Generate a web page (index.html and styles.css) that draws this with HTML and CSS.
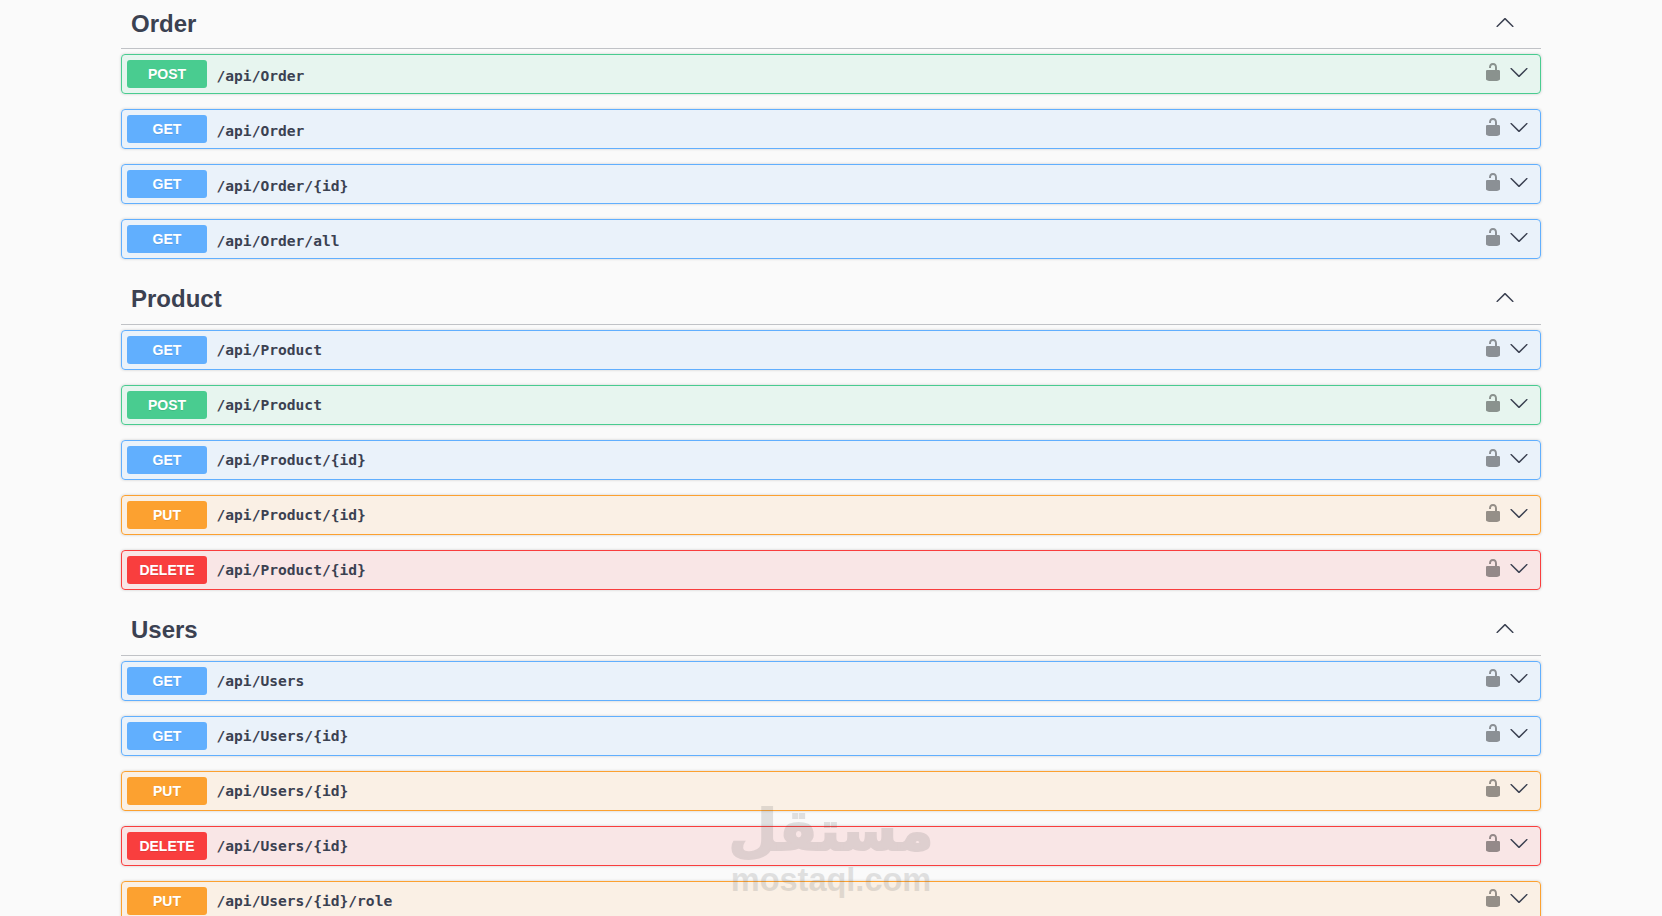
FILE: index.html
```html
<!DOCTYPE html>
<html lang="en">
<head>
<meta charset="utf-8">
<title>API</title>
<link rel="stylesheet" href="styles.css">
</head>
<body>
<svg class="defs" width="0" height="0" aria-hidden="true">
  <symbol id="lock" viewBox="0 0 20 20"><path d="M15.8 8H14V5.6C14 2.703 12.665 1 10 1 7.334 1 6 2.703 6 5.6V6h2v-.801C8 3.754 8.797 3 10 3c1.203 0 2 .754 2 2.199V8H4c-.553 0-1 .646-1 1.199V17c0 .549.428 1.139.951 1.307l1.197.387C5.672 18.861 6.55 19 7.1 19h5.8c.549 0 1.428-.139 1.951-.307l1.196-.387c.524-.167.953-.757.953-1.306V9.199C17 8.646 16.352 8 15.8 8z"/></symbol>
  <symbol id="down" viewBox="0 0 20 20"><path d="M17.418 6.109c.272-.268.709-.268.979 0s.271.701 0 .969l-7.908 7.83c-.27.268-.707.268-.979 0l-7.908-7.83c-.27-.268-.27-.701 0-.969.271-.268.709-.268.979 0L10 13.25l7.418-7.141z"/></symbol>
</svg>
<main class="wrapper">
  <section class="tag-section first">
    <h3 class="tag"><span class="tag-name">Order</span><svg class="up"><use href="#down"/></svg></h3>
    <div class="op post"><span class="method">POST</span><span class="path">/api/Order</span><svg class="lock"><use href="#lock"/></svg><svg class="down"><use href="#down"/></svg></div>
    <div class="op get"><span class="method">GET</span><span class="path">/api/Order</span><svg class="lock"><use href="#lock"/></svg><svg class="down"><use href="#down"/></svg></div>
    <div class="op get"><span class="method">GET</span><span class="path">/api/Order/{id}</span><svg class="lock"><use href="#lock"/></svg><svg class="down"><use href="#down"/></svg></div>
    <div class="op get"><span class="method">GET</span><span class="path">/api/Order/all</span><svg class="lock"><use href="#lock"/></svg><svg class="down"><use href="#down"/></svg></div>
  </section>
  <section class="tag-section">
    <h3 class="tag"><span class="tag-name">Product</span><svg class="up"><use href="#down"/></svg></h3>
    <div class="op get"><span class="method">GET</span><span class="path">/api/Product</span><svg class="lock"><use href="#lock"/></svg><svg class="down"><use href="#down"/></svg></div>
    <div class="op post"><span class="method">POST</span><span class="path">/api/Product</span><svg class="lock"><use href="#lock"/></svg><svg class="down"><use href="#down"/></svg></div>
    <div class="op get"><span class="method">GET</span><span class="path">/api/Product/{id}</span><svg class="lock"><use href="#lock"/></svg><svg class="down"><use href="#down"/></svg></div>
    <div class="op put"><span class="method">PUT</span><span class="path">/api/Product/{id}</span><svg class="lock"><use href="#lock"/></svg><svg class="down"><use href="#down"/></svg></div>
    <div class="op delete"><span class="method">DELETE</span><span class="path">/api/Product/{id}</span><svg class="lock"><use href="#lock"/></svg><svg class="down"><use href="#down"/></svg></div>
  </section>
  <section class="tag-section last">
    <h3 class="tag"><span class="tag-name">Users</span><svg class="up"><use href="#down"/></svg></h3>
    <div class="op get"><span class="method">GET</span><span class="path">/api/Users</span><svg class="lock"><use href="#lock"/></svg><svg class="down"><use href="#down"/></svg></div>
    <div class="op get"><span class="method">GET</span><span class="path">/api/Users/{id}</span><svg class="lock"><use href="#lock"/></svg><svg class="down"><use href="#down"/></svg></div>
    <div class="op put"><span class="method">PUT</span><span class="path">/api/Users/{id}</span><svg class="lock"><use href="#lock"/></svg><svg class="down"><use href="#down"/></svg></div>
    <div class="op delete"><span class="method">DELETE</span><span class="path">/api/Users/{id}</span><svg class="lock"><use href="#lock"/></svg><svg class="down"><use href="#down"/></svg></div>
    <div class="op put"><span class="method">PUT</span><span class="path">/api/Users/{id}/role</span><svg class="lock"><use href="#lock"/></svg><svg class="down"><use href="#down"/></svg></div>
  </section>
</main>
<div class="watermark">
  <div class="wm-ar" lang="ar" dir="rtl">مستقل</div>
  <div class="wm-en">mostaql.com</div>
</div>
</body>
</html>
```
FILE: styles.css
```css
html, body {
  margin: 0;
  height: 916px;
  overflow: hidden;
  background: #fafafa;
  color: #3b4151;
  font-family: "Liberation Sans", Arial, sans-serif;
}
.defs { position: absolute; }
.wrapper {
  box-sizing: border-box;
  max-width: 1460px;
  margin: -2px auto 0;
  padding: 0 20px;
}
.tag-section { margin: 0; }
.tag {
  display: flex;
  align-items: center;
  justify-content: space-between;
  box-sizing: border-box;
  height: 51px;
  margin: 0 0 5px;
  padding: 0 26px 0 10px;
  font-size: 24px;
  line-height: 1;
  font-weight: 700;
  border-bottom: 1px solid rgba(59, 65, 81, .3);
}
.first .tag-name { padding-top: 2px; }
.up {
  width: 20px;
  height: 20px;
  margin-bottom: 2px;
  fill: #3b4151;
  transform: rotate(180deg);
}
.first .up { margin-bottom: 0; }
.op {
  display: flex;
  align-items: flex-start;
  box-sizing: border-box;
  height: 40px;
  margin: 0 0 15px;
  padding: 5px 11px 5px 5px;
  border: 1px solid;
  border-radius: 4px;
  box-shadow: 0 0 3px rgba(0, 0, 0, .19);
}
.method {
  box-sizing: border-box;
  width: 80px;
  height: 28px;
  border-radius: 3px;
  color: #fff;
  font-size: 14px;
  font-weight: 700;
  line-height: 28px;
  text-align: center;
  text-shadow: 0 1px 0 rgba(0, 0, 0, .1);
}
.path {
  flex: 1;
  padding-left: 9.5px;
  font-family: "DejaVu Sans Mono", "Liberation Mono", monospace;
  font-size: 14.6px;
  font-weight: 700;
  line-height: 27px;
}
.first .path { line-height: 31px; }
.lock {
  width: 20px;
  height: 20px;
  margin: 2px 6px 0 0;
  fill: #000;
  opacity: .4;
}
.down {
  width: 20px;
  height: 20px;
  margin-top: 2px;
  fill: #3b4151;
}
.last .lock, .last .down { margin-top: 1px; }
.post { background: rgba(73, 204, 144, .1); border-color: #49cc90; }
.post .method { background: #49cc90; }
.get { background: rgba(97, 175, 254, .1); border-color: #61affe; }
.get .method { background: #61affe; }
.put { background: rgba(252, 161, 48, .1); border-color: #fca130; }
.put .method { background: #fca130; }
.delete { background: rgba(249, 62, 62, .1); border-color: #f93e3e; }
.delete .method { background: #f93e3e; }
.watermark {
  position: absolute;
  left: 681px;
  top: 797px;
  width: 300px;
  text-align: center;
  color: #5a5a5a;
  opacity: .16;
  pointer-events: none;
}
.wm-ar {
  font-family: "DejaVu Sans", sans-serif;
  font-size: 56px;
  font-weight: 700;
  line-height: 68px;
  -webkit-text-stroke: 2px #5a5a5a;
}
.wm-en {
  font-family: "Liberation Sans", Arial, sans-serif;
  font-size: 32.5px;
  font-weight: 700;
  line-height: 30px;
}
```
